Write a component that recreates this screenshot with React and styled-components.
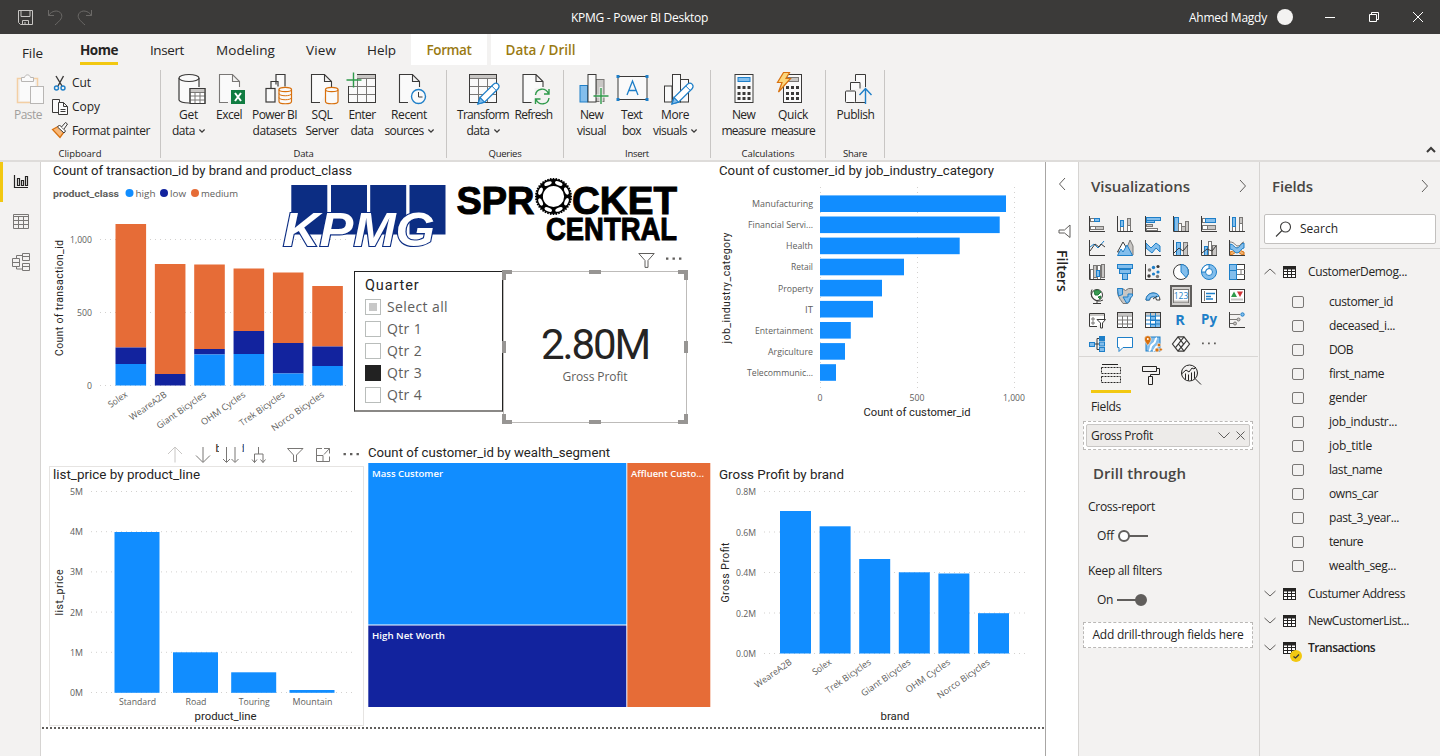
import React, { useLayoutEffect, useRef } from "react";
import styled, { createGlobalStyle, css } from "styled-components";

const UI = `"Open Sans", "Noto Sans", sans-serif`;
const DIN = `Roboto, "Liberation Sans", sans-serif`;
const C = {
  blue: "#118DFF", navy: "#12239E", orange: "#E66C37", ink: "#252423", grey: "#605E5C",
  pane: "#F3F2F1", line: "#D6D4D2", yellow: "#F2C811", ib: "#1E7FC8", ibf: "#83BEEC",
  ig: "#797775", igf: "#C8C6C4", dark: "#3B3A39", or: "#D8700D",
};

const Global = createGlobalStyle`
  * { box-sizing: border-box; }
  body { margin: 0; background: #fff; font-family: ${UI}; color: ${C.ink}; overflow: hidden; }
  svg { display: block; flex: none; overflow: visible; }
`;

/* ---------- text ---------- */
const Label = styled.span`
  display: block;
  flex: none;
  white-space: nowrap;
  font-family: ${(p) => (p.$din ? DIN : UI)};
  font-size: ${(p) => p.$size || 12}px;
  font-weight: ${(p) => p.$weight || 400};
  color: ${(p) => p.$color || C.ink};
  line-height: ${(p) => p.$lh || 16}px;
`;

/* Tracks its text so that it takes the given width. */
function T({ w, children, ...rest }) {
  const ref = useRef(null);
  useLayoutEffect(() => {
    const el = ref.current;
    if (!w || !el) return;
    const range = document.createRange();
    el.style.letterSpacing = "0px";
    range.selectNodeContents(el);
    const natural = range.getBoundingClientRect().width;
    el.style.letterSpacing = `${(w - natural) / String(children).length}px`;
  }, [w, children]);
  return <Label ref={ref} {...rest}>{children}</Label>;
}

function St({ x, y, w, size = 9, anchor = "start", fill = C.grey, din, weight = 400, rot, children }) {
  return (
    <text x={x} y={y} fontSize={size} fontFamily={din ? DIN : UI} fontWeight={weight} fill={fill}
      textAnchor={anchor} textLength={w} lengthAdjust="spacingAndGlyphs"
      transform={rot ? `rotate(${rot} ${x} ${y})` : undefined}>{children}</text>
  );
}

/* ---------- frame ---------- */
const Window = styled.div`
  width: 1440px; height: 756px; display: flex; flex-direction: column; overflow: hidden;
`;
const TitleBar = styled.header`
  height: 34px; background: ${C.dark}; display: flex; align-items: center; padding-left: 17px; flex: none;
`;
const TitleText = styled.div`margin-left: 478px; width: 137px; padding-top: 2px;`;
const UserText = styled.div`margin-left: 481px; width: 78px; padding-top: 2px;`;
const Avatar = styled.div`
  width: 16px; height: 16px; border-radius: 50%; background: ${C.pane}; margin-left: 10px;
`;
const Ribbon = styled.section`
  height: 128px; flex: none; background: ${C.pane}; border-bottom: 2px solid #dedcda; display: flex; flex-direction: column;
`;
const Tabs = styled.nav`display: flex; height: 36px; flex: none;`;
const Tab = styled.div`
  margin-left: ${(p) => p.$gap}px; padding-top: ${(p) => p.$top || 8}px; height: 31px;
  ${(p) => p.$active && css`border-bottom: 3px solid ${C.yellow};`}
  ${(p) => p.$ctx && css`background: #fff; width: ${p.$ctx}px; display: flex; justify-content: center;`}
`;
const Groups = styled.div`display: flex; height: 90px;`;
const Group = styled.div`
  width: ${(p) => p.$w}px; height: 88px; border-right: 1px solid #c8c6c4; display: flex; flex-direction: column;
`;
const GroupBody = styled.div`display: flex; height: 75px; padding-left: ${(p) => p.$pad || 0}px;`;
const GroupName = styled.div`display: flex; justify-content: center; padding-top: 1px; height: 13px;`;
const BigButton = styled.div`
  width: ${(p) => p.$w}px; display: flex; flex-direction: column; align-items: center; flex: none;
  & > svg { margin-bottom: 1px; }
`;
const Line2 = styled.div`display: flex; align-items: center; gap: 4px;`;
const SmallButtons = styled.div`display: flex; flex-direction: column; padding-top: 1px;`;
const SmallButton = styled.div`height: 24px; display: flex; align-items: center; gap: 4px;`;
const Collapse = styled.div`margin-left: auto; align-self: flex-end; padding: 0 4px 7px 0;`;

const Body = styled.div`display: flex; flex: 1; min-height: 0;`;
const Rail = styled.nav`
  width: 41px; background: ${C.pane}; border-right: 1px solid ${C.line}; flex: none; display: flex; flex-direction: column;
`;
const RailItem = styled.div`
  height: 40px; display: flex; align-items: center; padding-left: ${(p) => (p.$on ? 9 : 12)}px;
  ${(p) => p.$on && css`border-left: 3px solid ${C.yellow};`}
`;
const Canvas = styled.main`
  position: relative; width: 1005px; background: #fff; border-right: 1px solid #a8a6a4; flex: none; overflow: hidden;
`;
const Visual = styled.div`
  position: absolute; left: ${(p) => p.$x - 41}px; top: ${(p) => p.$y - 162}px;
  width: ${(p) => p.$w}px; height: ${(p) => p.$h}px; ${(p) => p.$bg && `background: ${p.$bg};`}
`;
const PageEdge = styled.div`
  position: absolute; left: 1px; right: 0; top: 565px; height: 2px;
  background: repeating-linear-gradient(90deg, ${C.grey} 0 2px, #fff 2px 4px);
`;

/* ---------- slicer and card ---------- */
const Slicer = styled(Visual)`
  border: 1px solid #222; border-bottom: 2px solid #8a8886; padding: 6px 0 0 10px; display: flex; flex-direction: column;
`;
const SlicerRows = styled.div`padding-top: 2px;`;
const SlicerRow = styled.div`display: flex; align-items: center; height: 22px; gap: 6px;`;
const SlicerBox = styled.div`
  width: 16px; height: 16px; border: 1px solid #b9bdbb; background: ${(p) => (p.$state === "on" ? "#222" : "#fff")};
  display: flex; align-items: center; justify-content: center;
  ${(p) => p.$state === "on" && "border-color: #222;"}
  &::after { content: ""; width: 8px; height: 8px; background: ${(p) => (p.$state === "part" ? "#c8c8c8" : "transparent")}; }
`;
const Card = styled(Visual)`
  display: flex; flex-direction: column; align-items: center; padding-top: 49px; border: 1px solid #bdbbb9;
`;
const Handle = styled.i`
  position: absolute; background: #979593;
  left: ${(p) => p.$l}px; top: ${(p) => p.$t}px; width: ${(p) => p.$w}px; height: ${(p) => p.$h}px;
`;

/* ---------- side panes ---------- */
const Filters = styled.aside`
  width: 33px; background: #fff; border-right: 1px solid ${C.line}; flex: none;
  display: flex; flex-direction: column; align-items: center; padding-top: 15px;
`;
const FilterMark = styled.div`margin-top: 33px; padding-left: 4px;`;
const VerticalLabel = styled.div`
  writing-mode: vertical-rl; margin-top: 12px; font: 600 14px/18px ${UI}; color: ${C.ink}; letter-spacing: 0; height: 48px;
`;
const Pane = styled.aside`
  width: 181px; background: ${C.pane}; flex: none; display: flex; flex-direction: column;
  ${(p) => p.$edge && `border-right: 1px solid ${C.line};`}
`;
const PaneHead = styled.div`
  height: 50px; display: flex; align-items: center; justify-content: space-between; padding: 0 12px 2px;
`;
const VizGrid = styled.div`
  display: grid; grid-template-columns: repeat(6, 28px); grid-auto-rows: 24px; padding-left: 4px; height: 144px;
`;
const VizCell = styled.div`
  display: flex; align-items: center; justify-content: center;
`;
const VizPicked = styled.div`
  width: 22px; height: 22px; border: 2px solid #605e5c; background: #d2d0ce; display: flex; align-items: center; justify-content: center;
`;
const PaneTabs = styled.div`display: flex; border-top: 1px solid #d8d6d4; height: 36px; padding-left: 12px; margin-right: 1px;`;
const PaneTab = styled.div`
  width: 40px; height: 36px; display: flex; align-items: center; justify-content: center;
  ${(p) => p.$on && `border-bottom: 3px solid ${C.yellow};`}
`;
const FieldsLabel = styled.div`padding: 7px 0 0 12px; height: 29px;`;
const Well = styled.div`
  margin: ${(p) => p.$gap || 0}px 6px 0 4px; height: ${(p) => p.$h}px; border: 1px dashed #bab8b6; background: #fff; padding: 2px;
  display: flex; align-items: center; justify-content: center;
`;
const Pill = styled.div`
  height: 23px; flex: 1; background: #edebe9; border: 1px solid #c8c6c4; border-radius: 2px; display: flex; align-items: center; padding: 0 4px; gap: 6px;
`;
const Grow = styled.div`flex: 1;`;
const DrillHead = styled.div`padding: 15px 0 0 14px; height: 41px;`;
const Setting = styled.div`padding: 8px 0 0 9px; height: 32px;`;
const ToggleRow = styled.div`height: 32px; padding: 0 0 6px 18px; display: flex; align-items: center; gap: 4px;`;

const Search = styled.div`
  margin: 2px 3px 4px 4px; width: 172px; height: 30px; border: 1px solid #c2c0be; border-radius: 2px; background: #fff; display: flex; align-items: center; padding-left: 10px; gap: 8px;
`;
const Tree = styled.div`border-top: 1px solid ${C.line}; padding-top: 9px;`;
const TableRow = styled.div`
  height: 27px; display: flex; align-items: center; padding-left: 4px; gap: 7px; position: relative;
`;
const TableName = styled.div`margin-left: 5px;`;
const FieldList = styled.div`padding: 5px 0 2px;`;
const FieldRow = styled.div`height: 24px; display: flex; align-items: center; padding-left: 32px; gap: 25px;`;
const CheckBox = styled.div`width: 12px; height: 12px; border: 1px solid #797775; border-radius: 2px; margin-top: -1px;`;
const TickBadge = styled.div`position: absolute; left: 30px; top: 16px;`;

/* ---------- small icons ---------- */
const Svg = ({ w, h, box, children, sw = 1, stroke = C.dark, fill = "none" }) => (
  <svg width={w} height={h} viewBox={box || `0 0 ${w} ${h}`} fill={fill} stroke={stroke} strokeWidth={sw}>{children}</svg>
);
const Chevron = ({ d, w = 12, h = 7, color = C.grey, sw = 1 }) => <Svg w={w} h={h} stroke={color} sw={sw}><path d={d} /></Svg>;
const DownSmall = () => <Svg w={6} h={4} sw={1.3}><path d="M.4.5 3 3.100 5.600.5" /></Svg>;
const Funnel = ({ color = C.grey }) => <Svg w={17} h={15} stroke={color}><path d="M.8.5h15.4L10 7.5v6.9H7V7.5z" /></Svg>;
const Dots = () => <Svg w={16} h={3} stroke="none" fill={C.grey}><path d="M0 .5h2.4v2.2H0zM6.5.5h2.4v2.2H6.5zM13 .5h2.4v2.2H13z" /></Svg>;

const Pencil = ({ x, y }) => (
  <g transform={`translate(${x} ${y})`}>
    <path d="M0 21 2 14.5 15.5 1.2q2.6-2 4.6 0t0 4.6L6.5 19.2z" fill="#fff" stroke={C.ib} strokeWidth="1.2" />
    <path d="M0 21 2 14.5 6.5 19.2z" fill={C.ibf} stroke={C.ib} strokeWidth="1.2" />
    <path d="M13.8 3 18.3 7.5" stroke={C.ib} />
  </g>
);
const Page = ({ x, c = C.dark }) => <path d={`M${x + 9} 102.5H${x}.5V74.5H${x + 13}.5L${x + 20}.5 81.5V87M${x + 13}.5 74.5V81.5H${x + 20}.5`} stroke={c} fill="#fafafa" strokeWidth="1.1" />;
const Drum = ({ x }) => (
  <g stroke={C.or} fill="#fafafa" strokeWidth="1.2">
    <path d={`M${x} 89.5V101.5c0 3 12.5 3 12.5 0V89.5`} />
    <ellipse cx={x + 6.25} cy="89.5" rx="6.25" ry="2.2" />
  </g>
);
const Grid9 = ({ x }) => (
  <g><rect x={x} y="74.5" width="27" height="28" fill="#fafafa" /><path d={`M${x} 76.5h27`} stroke={C.igf} strokeWidth="3" />
    <path d={`M${x} 78.5h27M${x} 86.5h27M${x} 94.5h27M${x + 9} 78.5v24M${x + 18} 78.5v24`} stroke={C.ig} /><rect x={x} y="74.5" width="27" height="28" /></g>
);
const Calc = ({ x, f }) => (
  <g><rect x={x + 0.5} y="74.5" width="18" height="28" fill="#fafafa" /><rect x={x + 3.5} y="77.5" width="12" height="4" fill={f} stroke={f === C.ibf ? C.ib : C.ig} />
    {[86, 92, 97].map((y) => [3, 8, 13].map((d) => <rect key={y + "-" + d} x={x + d} y={y} width="3" height="3" fill={C.dark} stroke="none" />))}</g>
);

const BIG = {
  paste: <g><rect x="17.5" y="78.5" width="20" height="24" stroke="#f3cfa4" strokeWidth="1.5" /><rect x="20" y="81" width="15" height="20" fill="#fafafa" stroke="none" /><path d="M21.5 81.5v-4h3c1-3.500 5-3.500 6 0h3v4z" fill="#fafafa" stroke="#b8b6b4" /><rect x="30.500" y="86.500" width="13" height="17" fill="#fafafa" stroke="#b8b6b4" /></g>,
  get: <g><path d="M179 78h19.500v10h-9v15q-9 0-10.500-3z" fill="#fafafa" stroke="none" /><path d="M178.500 78v22c1 2 4 3 10 3M198.500 78v9" strokeWidth="1.2" /><ellipse cx="188.500" cy="78" rx="10" ry="3.500" fill="#fafafa" strokeWidth="1.200" /><rect x="189.500" y="88.500" width="15" height="15" fill="#fff" /><path d="M190 90.500h14" stroke={C.igf} strokeWidth="3" /><path d="M189.500 92.500h15M189.500 96h15M189.500 100h15M194.500 92.500v11M199.500 92.500v11" stroke={C.ig} /><rect x="189.500" y="88.500" width="15" height="15" /></g>,
  excel: <g><Page x={219} c={C.ig} /><rect x="231" y="90" width="14" height="14" fill="#107C41" stroke="none" /><path d="M235 93l6 8M241 93l-6 8" stroke="#fff" strokeWidth="2" /></g>,
  pbi: <g><path d="M275.500 84.500v-10h9v12M270.500 88v-6.500h7v5" fill="#fafafa" strokeWidth="1.200" /><rect x="265.500" y="88.500" width="9" height="13.500" fill="#fafafa" strokeWidth="1.200" /><Drum x={278.500} /><path d="M278.500 93.500c0 3 12.500 3 12.500 0M278.500 97.500c0 3 12.500 3 12.500 0" stroke={C.or} /></g>,
  sql: <g><Page x={311} /><Drum x={325.500} /></g>,
  enter: <g><Grid9 x={348.500} /><rect x="346" y="73" width="11" height="13" fill={C.pane} stroke="none" /><path d="M353.500 72.500v15M346.500 80h15" stroke="#2F9A4B" strokeWidth="1.400" /></g>,
  recent: <g><Page x={399} /><circle cx="418.500" cy="96.500" r="7" fill="#fafafa" stroke={C.ib} strokeWidth="1.400" /><path d="M418.500 92v5h4" stroke={C.dark} /></g>,
  transform: <g><Grid9 x={469.500} /><Pencil x={478} y={83} /></g>,
  refresh: <g><Page x={522} /><rect x="534" y="88" width="16" height="16" fill={C.pane} stroke="none" /><path d="M535 95c1-7 10-8 13-1.500M548.500 89v5h-5M548.500 98c-1 7-10 8-13 1.500M535 104v-5h5" stroke="#2F9A4B" strokeWidth="1.400" /></g>,
  visual: <g><rect x="579.500" y="85.500" width="7.500" height="16.500" fill={C.ibf} stroke={C.ib} /><rect x="595.500" y="79.500" width="8" height="22" fill={C.igf} stroke={C.ig} /><rect x="587.500" y="74.500" width="8" height="27.500" fill="#fafafa" /><path d="M600.500 87v17M596 96h12" stroke={C.pane} strokeWidth="3" /><path d="M600.500 88v16M593 96h15" stroke="#2F9A4B" strokeWidth="1.400" /></g>,
  text: <g><rect x="617.500" y="76.500" width="29" height="23" fill="#fafafa" /><path d="M616 75h3v3h-3zM645 75h3v3h-3zM616 98h3v3h-3zM645 98h3v3h-3z" fill={C.ib} stroke="none" /><path d="M626.500 95 632 81 637.500 95M628.500 90.500h7" stroke={C.ib} strokeWidth="1.300" /></g>,
  more: <g fill="#fafafa"><rect x="664.500" y="86" width="7.500" height="16" /><rect x="680.500" y="79.500" width="8" height="22.500" /><rect x="672.500" y="74.500" width="8" height="27.500" /><Pencil x={672} y={83} /></g>,
  measure: <Calc x={734} f={C.ibf} />,
  quick: <g><Calc x={783} f={C.igf} /><path d="M783.500 72.500h6l-3.500 6h4.500L778.500 92l3.500-9.500h-4.500z" fill="#FBD67B" stroke={C.or} strokeWidth="1.200" /></g>,
  publish: <g><path d="M854.500 81v-6.500h10V87M849.500 90v-7.500h9.500v6M864 102.500h-10" fill="#fafafa" /><rect x="844.500" y="91" width="10" height="11.500" rx="1" fill="#fafafa" /><path d="M864.500 104V89M858.500 95l6-6.500 6 6.500" stroke={C.ib} strokeWidth="1.400" /></g>,
};

const GROUPS = [
  { name: "Data", nw: 20, w: 286, pad: 7, items: [
    ["get", 41, 188.5, "Get", 19, "data", 23, 1], ["excel", 40, 229, "Excel", 26], ["pbi", 51, 274.5, "Power BI", 45, "datasets", 44],
    ["sql", 44, 322, "SQL", 21, "Server", 33], ["enter", 36, 362, "Enter", 27, "data", 23], ["recent", 58, 409, "Recent", 36, "sources", 39, 1]] },
  { name: "Queries", nw: 33, w: 117, pad: 9, items: [["transform", 54, 483, "Transform", 52, "data", 23, 1], ["refresh", 47, 533.5, "Refresh", 38]] },
  { name: "Insert", nw: 24, w: 147, pad: 9, items: [["visual", 37, 591.5, "New", 23, "visual", 29], ["text", 43, 631.5, "Text", 21, "box", 19], ["more", 44, 675, "More", 28, "visuals", 34, 1]] },
  { name: "Calculations", nw: 53, w: 115, pad: 8, items: [["measure", 49, 743.5, "New", 23, "measure", 44], ["quick", 50, 793, "Quick", 30, "measure", 44]] },
  { name: "Share", nw: 24, w: 59, pad: 5, items: [["publish", 49, 855, "Publish", 38]] },
];

/* ---------- visualization gallery ---------- */
const b = (x, y, w, h) => <rect x={x + 0.5} y={y + 0.5} width={w} height={h} fill={C.ibf} stroke={C.ib} />;
const g = (x, y, w, h) => <rect x={x + 0.5} y={y + 0.5} width={w} height={h} fill={C.igf} stroke={C.ig} />;
const k = (x, y, w, h) => <rect x={x + 0.5} y={y + 0.5} width={w} height={h} fill="#fff" stroke={C.ig} />;
const ax = <path d="M.5 0V15.500H16" stroke={C.dark} />;
const VIZ = [
  <>{k(1, 2, 4, 3)}{b(5, 2, 5, 3)}{k(1, 10, 5, 3)}{g(6, 10, 8, 3)}{ax}</>,
  <>{k(3, 10, 3, 5)}{b(3, 4, 3, 6)}{k(10, 9, 3, 6)}{g(10, 2, 3, 7)}{ax}</>,
  <>{b(1, 1, 14, 3)}{b(1, 4, 8, 2)}{g(1, 8, 6, 2)}{k(1, 12, 11, 2)}{ax}</>,
  <>{b(1, 1, 4, 14)}{k(5, 7, 3, 8)}{g(8, 10, 4, 5)}{g(12, 5, 3, 10)}{ax}</>,
  <>{k(1, 2, 3, 4)}{b(4, 2, 10, 4)}{k(1, 9, 5, 4)}{g(6, 9, 8, 4)}{ax}</>,
  <>{k(3, 10, 3, 5)}{b(3, 1, 3, 9)}{k(10, 7, 3, 8)}{g(10, 1, 3, 6)}{ax}</>,
  <><path d="M1 7 5 4l4 4 6-7" stroke={C.ib} /><path d="M1 11 6 4l4 3 2-3 4 3" stroke={C.dark} />{ax}</>,
  <><path d="M7 15 13 0l3 6v9z" fill={C.igf} stroke={C.ig} /><path d="M.5 12 6 2l6 10z" fill="#fff" stroke={C.dark} /><path d="M.5 15.500 4 9l2 3 4-7 5.500 10.500z" fill={C.ibf} stroke={C.ib} /></>,
  <><path d="M1 3l5 5 5-5 4 3v6l-4-4-4 5-6-5z" fill={C.ibf} stroke={C.ib} />{ax}</>,
  <>{b(3, 2, 4, 13)}{g(10, 2, 4, 13)}<path d="M1 13 6 8l4 3 5-6" stroke={C.dark} />{ax}</>,
  <>{b(3, 6, 3, 9)}{k(7, 1, 3, 14)}{g(11, 5, 4, 10)}<path d="M1 13 6 9l5 2 4-5" stroke={C.dark} />{ax}</>,
  <><path d="M1 12c4 0 4-4 7-4s4 4 7 4v3c-4 0-4-3-7-3s-3 3-7 3z" fill="#F1B16F" stroke={C.or} /><path d="M1 4c4 0 4 4 7 4s3-5 7-5v5c-3 0-4 5-7 5S5 9 1 9z" fill={C.ibf} stroke={C.ib} /><path d="M1 2c5 0 5 4 8 4s3-4 6-4" stroke={C.ig} />{ax}</>,
  <>{k(1, 5, 3, 10)}{g(4, 1, 3, 12)}{k(8, 1, 3, 14)}{b(7, 6, 3, 6)}{g(12, 0, 3, 13)}{ax}</>,
  <>{b(0, 0, 15, 4)}{b(2, 5, 11, 4)}{b(5, 9, 5, 6)}</>,
  <><g stroke="none"><circle cx="4.500" cy="6" r="1.800" fill={C.ig} /><circle cx="13" cy="2.500" r="1.600" fill={C.dark} /><circle cx="8.500" cy="3.500" r="1.700" fill={C.ib} /><circle cx="8.500" cy="10" r="1.600" fill={C.ib} /><circle cx="13" cy="8" r="1.600" fill={C.ib} /><circle cx="4" cy="12" r="1.700" fill={C.dark} /><circle cx="12.500" cy="12.500" r="1.700" fill={C.ig} /></g>{ax}</>,
  <><circle cx="8" cy="8" r="7.500" fill="#fff" /><path d="M8 .500a7.500 7.500 0 0 1 5 13L8 8z" fill={C.ibf} stroke={C.ib} /></>,
  <><circle cx="8" cy="8" r="5.500" stroke={C.ibf} strokeWidth="4" /><circle cx="8" cy="8" r="7.500" stroke={C.ib} /><circle cx="8" cy="8" r="3.500" stroke={C.ib} fill="#fff" /><path d="M4.500 8H.500A7.500 7.500 0 0 1 8 .500v4A3.500 3.500 0 0 0 4.500 8" fill="#fff" stroke={C.ib} /></>,
  <><rect x=".5" y=".5" width="15" height="15" fill="#fff" />{b(0, 0, 7, 6)}{b(0, 6, 7, 9)}<path d="M8 5.500h8M12 5.500v5M8 10.500h8" stroke={C.ig} /></>,
  <><circle cx="8" cy="7" r="5.500" fill="#fff" /><path d="M5 3l4-1 3 2-3 3-3 0zM9 9l3-1-1 3z" fill="#3A9B53" stroke="#237B3C" /><path d="M3 1.500A8 8 0 0 0 14 12M8 13v2.500M4 15.500h8" /></>,
  <><path d="M.500.500h5l3 2 3-2h4v7c-3 2-2 7-5 8H6C4 12 0 9 .500.500" fill={C.igf} stroke={C.ig} /><path d="M.500.500h5v6L1.500 8zM6 9h5v-3h4.500v2c-4 2-2 7-6 7z" fill={C.ibf} stroke={C.ib} /></>,
  <><path d="M1 12a7 7 0 0 1 14 0h-3.500a3.500 3.500 0 0 0-7 0z" fill="#fff" stroke={C.dark} /><path d="M1 12C1 4 12 3 14 8l-3.500 1.500C8 8 4.500 9 4.500 12z" fill={C.ibf} stroke={C.ib} /><path d="M8 11l4-3" /></>,
  <><rect x=".5" y="1.500" width="15" height="13" fill="#fff" stroke={C.ig} /><path d="M1 13.500h14" stroke={C.igf} strokeWidth="2" /><text x="8" y="10.500" fontSize="8.500" textAnchor="middle" fontFamily={UI} stroke="none" fill={C.ib}>123</text></>,
  <><rect x=".5" y="1.500" width="15" height="13" fill="#fff" /><path d="M3.500 3v10" stroke={C.ig} /><path d="M5 5.500h9M5 8.500h5M5 11h7" stroke={C.ib} strokeWidth="1.500" /></>,
  <><rect x=".5" y="1.500" width="15" height="13" fill="#fff" /><path d="M2 9 5 3.500 8 9z" fill="#2F9A4B" stroke="none" /><path d="M8 3.500h6L11 9z" fill="#D13438" stroke="none" /><path d="M2 11.500h12" stroke={C.igf} strokeWidth="2" /></>,
  <><path d="M8 14.500H.500v-13h15V7" fill="#fff" /><path d="M1 3h14" stroke={C.igf} strokeWidth="2" /><path d="M3 6h2v2H3zM3 10h2v2H3z" stroke={C.ig} /><path d="M8 7.500h8.500L13.500 11v5h-2v-5z" fill="#fff" /></>,
  <><rect x=".5" y=".5" width="15" height="15" fill="#fff" /><path d="M1 2h14" stroke={C.igf} strokeWidth="2" /><path d="M.5 4h15M.5 8h15M.5 12h15M5.500 4v12M10.500 4v12" stroke={C.ig} /></>,
  <><rect x=".5" y=".5" width="15" height="15" fill="#fff" /><path d="M1 2h14" stroke={C.igf} strokeWidth="3" />{b(5, 4, 5, 4)}{b(10, 8, 5, 7)}{b(5, 12, 5, 3)}<path d="M.5 4h15M.5 8h15M.5 12h15M5.500 0v16M10.500 0v16" stroke={C.ib} /><rect x=".5" y=".5" width="15" height="15" /></>,
  <text x="7" y="13" fontSize="14.500" textAnchor="middle" fontWeight="700" fontFamily={UI} stroke="none" fill={C.ib}>R</text>,
  <text x="8" y="12" fontSize="14" textAnchor="middle" textLength="16" lengthAdjust="spacingAndGlyphs" fontWeight="700" fontFamily={UI} stroke="none" fill={C.ib}>Py</text>,
  <><path d="M1 2.500h10M1 7.500h8M1 11.500h4" stroke={C.ig} /><circle cx="13.500" cy="2.500" r="1.700" fill={C.ibf} stroke={C.ib} /><circle cx="9.500" cy="7.500" r="1.500" stroke={C.ig} fill={C.igf} /><circle cx="6" cy="11.500" r="1.500" stroke={C.ig} fill={C.igf} />{ax}</>,
  <><path d="M6 8h4M8 2.500v11M8 2.500h3M8 13.500h3" />{b(0, 6, 5, 4)}<rect x="10.500" y=".5" width="5" height="4" fill={C.ib} stroke={C.ib} /><rect x="10.500" y="6" width="5" height="4" fill={C.ibf} stroke={C.ib} /><rect x="10.500" y="11.500" width="5" height="4" fill={C.ibf} stroke={C.ib} /></>,
  <path d="M.5 1.500h15v10H6l-4 4v-4H.500z" fill="#fff" stroke={C.ib} />,
  <><rect x="1" y="1" width="14" height="14" fill={C.ibf} stroke={C.ib} /><path d="M4 15c3-2 0-5 4-7s1-5 4-6M8 15c3-1 1-4 5-5" stroke="#fff" strokeWidth="2" /><g fill={C.or} stroke={C.pane} strokeWidth=".6"><path d="M2.800 9.500C0 6-.500 4.500-.500 3a3.300 3.300 0 0 1 6.600 0c0 1.500-.500 3-3.300 6.500z" /><circle cx="14" cy="9" r="1.800" /><circle cx="12" cy="14" r="2" /><circle cx="15.800" cy="13.500" r="1.500" /></g><circle cx="2.800" cy="3" r="1" fill="#fff" stroke="none" /></>,
  <g strokeWidth="1.200"><path d="M5 .8-.5 8 5 15.200h6L16.500 8 11 .8z" fill="#fafafa" /><path d="M5 .8 10.500 8 5 15.200M11 .8 2.500 11.700M11 15.200 5.500 8M13.700 4.500 8 11.700" /></g>,
  <path d="M1 6.500h1.800v1.800H1zM7 6.500h1.800v1.800H7zM13 6.500h1.800v1.800H13z" fill={C.grey} stroke="none" />,
];

/* ---------- charts ---------- */
const grid = { stroke: "#d3d1cf", strokeWidth: 1, strokeDasharray: "1 4" };

function StackedChart() {
  const tops = [[224, 347.5, 364], [264, 374, 385.5], [264.5, 349, 354.5], [268.5, 331, 354], [272.5, 343, 373.5], [286, 346.5, 366]];
  const names = [["Solex", 21], ["WeareA2B", 43], ["Giant Bicycles", 58], ["OHM Cycles", 52], ["Trek Bicycles", 53], ["Norco Bicycles", 62]];
  return (
    <Visual $x={45} $y={162} $w={312} $h={280}>
      <svg width="312" height="280" viewBox="45 162 312 280">
        <St x={53} y={175} w={299} size={12} fill={C.ink} din>Count of transaction_id by brand and product_class</St>
        <St x={53} y={197} w={66} size={9.5} din weight={700}>product_class</St>
        {[["high", C.blue, 129.5, 20], ["low", C.navy, 164, 16], ["medium", C.orange, 195, 37]].map(([n, c, x, w]) => (
          <g key={n}><circle cx={x} cy="193" r="4" fill={c} /><St x={x + 6} y={197} w={w} size={9.5}>{n}</St></g>
        ))}
        {[239.5, 312.5, 385.5].map((y) => <path key={y} d={`M100 ${y}H350`} {...grid} />)}
        <St x={92} y={243} w={22} anchor="end">1,000</St>
        <St x={92} y={316} w={15} anchor="end">500</St>
        <St x={92} y={389} w={5} anchor="end">0</St>
        <text transform="translate(63 298) rotate(-90)" textAnchor="middle" textLength="116" fontFamily={DIN} fontSize="10.500" fill={C.ink}>Count of transaction_id</text>
        {tops.map(([m, l, h], i) => {
          const x = 115.500 + i * 39.350;
          return (
            <g key={i}>
              <rect x={x} y={m} width="30.600" height={l - m} fill={C.orange} />
              <rect x={x} y={l} width="30.600" height={h - l} fill={C.navy} />
              <rect x={x} y={h} width="30.600" height={385.5 - h} fill={C.blue} />
              <St x={128 + i * 39.350} y={396} w={names[i][1]} anchor="end" rot={-35}>{names[i][0]}</St>
            </g>
          );
        })}
      </svg>
    </Visual>
  );
}

function Logos() {
  const teeth = Array.from({ length: 40 }, (_, i) => i * 9);
  return (
    <Visual $x={276} $y={176} $w={410} $h={90}>
      <svg width="410" height="90" viewBox="276 176 410 90">
        {[291.3, 331, 370.2, 409.5].map((x) => <rect key={x} x={x} y="185" width="36" height="49.500" fill="#0C2D83" />)}
        <text x="283" y="246" fontFamily="Liberation Sans" fontWeight="700" fontStyle="italic" fontSize="48" textLength="152" lengthAdjust="spacingAndGlyphs" fill="#fff" stroke="#0C2D83" strokeWidth="2.200" paintOrder="stroke">KPMG</text>
        <g fontFamily="Liberation Sans" fontWeight="700" fill="#000" stroke="#000" strokeWidth="1">
          <text x="456.500" y="213.500" fontSize="39" textLength="78" lengthAdjust="spacingAndGlyphs">SPR</text>
          <text x="572" y="213.500" fontSize="39" textLength="105" lengthAdjust="spacingAndGlyphs">CKET</text>
          <text x="546" y="239.500" fontSize="32" textLength="131" lengthAdjust="spacingAndGlyphs">CENTRAL</text>
        </g>
        <g transform="translate(553.500 196.500)">
          {teeth.map((a) => <rect key={a} x="-.8" y="-18.500" width="1.600" height="3" transform={`rotate(${a})`} />)}
          <circle r="14" fill="none" stroke="#000" strokeWidth="6.800" />
          {Array.from({ length: 8 }, (_, i) => <ellipse key={i} cx="0" cy="-14" rx="3.900" ry="1.900" fill="#fff" transform={`rotate(${i * 45 + 22})`} />)}
        </g>
      </svg>
    </Visual>
  );
}

function IndustryChart() {
  const rows = [["Manufacturing", 1006, 61], ["Financial Servi...", 999.7, 65], ["Health", 959.7, 27], ["Retail", 904, 22], ["Property", 882, 35], ["IT", 873, 8], ["Entertainment", 850.8, 58], ["Argiculture", 845, 45], ["Telecommunic...", 836, 66]];
  return (
    <Visual $x={714} $y={162} $w={326} $h={262}>
      <svg width="326" height="262" viewBox="714 162 326 262">
        <St x={719} y={175} w={275} size={12} fill={C.ink} din>Count of customer_id by job_industry_category</St>
        {[820, 917, 1014].map((x) => <path key={x} d={`M${x}.5 187V388`} {...grid} />)}
        {rows.map(([n, end, w], i) => (
          <g key={n}>
            <rect x="820" y={195.400 + i * 21.100} width={end - 820} height="16.600" fill={C.blue} />
            <St x={813} y={207.100 + i * 21.100} w={w} anchor="end">{n}</St>
          </g>
        ))}
        <St x={820} y={401} w={5} anchor="middle">0</St>
        <St x={917} y={401} w={15} anchor="middle">500</St>
        <St x={1014} y={401} w={22} anchor="middle">1,000</St>
        <St x={917} y={416} w={107} size={10.5} anchor="middle" fill={C.ink} din>Count of customer_id</St>
        <text transform="translate(730 288) rotate(-90)" textAnchor="middle" textLength="111" fontFamily={DIN} fontSize="10.500" fill={C.ink}>job_industry_category</text>
      </svg>
    </Visual>
  );
}

function PriceChart() {
  const bars = [["Standard", 114.500, 532, 37], ["Road", 173, 652.3, 21], ["Touring", 231.200, 672.3, 31], ["Mountain", 289.500, 690, 40]];
  return (
    <Visual $x={45} $y={440} $w={322} $h={288}>
      <svg width="322" height="288" viewBox="45 440 322 288">
        <St x={215.500} y={452} w={29} size={11} fill={C.ink} din>brand</St>
        <path d="M219 442h23.500v14h-23.500zM244.500 442h4v14h-4z" fill="#fff" />
        <g fill="none" stroke={C.ig}>
          <path d="M175 462.500v-15M168 454l7-7 7 7" stroke="#c8c6c4" />
          <path d="M203 447v15M196 455.500l7 7 7-7" />
          <path d="M226.500 447v15M223 459l3.500 3.500 3.500-3.500M235 447v15M231.500 459l3.500 3.500 3.500-3.500" />
          <path d="M258.500 447v7M254.500 462.500v-8.500h8.500v8.500M252 459.500l2.500 3 2.500-3M260.500 459.500l2.500 3 2.500-3" />
          <path d="M287.500 448.500h15.500l-6.500 6.500v6.500h-3V455z" />
          <path d="M322 448.500h-5.500v13h13v-5M316.500 455.500h6.500v6M324 448.500h5.500v5M329.500 448.500l-5.500 6" />
        </g>
        <path d="M343.500 453h2.400v2.200h-2.400zM350 453h2.400v2.200h-2.400zM356.500 453h2.400v2.200h-2.400z" fill={C.grey} />
        <rect x="49.500" y="466.500" width="314" height="259" fill="#fff" stroke="#e6e4e2" />
        <St x={53} y={479} w={147} size={12} fill={C.ink} din>list_price by product_line</St>
        {["5M", "4M", "3M", "2M", "1M", "0M"].map((n, i) => (
          <g key={n}><path d={`M91 ${491.500 + i * 40.200}H356`} {...grid} /><St x={83} y={495 + i * 40.200} w={13} anchor="end">{n}</St></g>
        ))}
        {bars.map(([n, x, y, w]) => (
          <g key={n}><rect x={x} y={y} width="45" height={692.800 - y} fill={C.blue} /><St x={x + 23} y={705} w={w} anchor="middle">{n}</St></g>
        ))}
        <St x={225.500} y={720} w={62} size={10.500} anchor="middle" fill={C.ink} din>product_line</St>
        <text transform="translate(63 592.500) rotate(-90)" textAnchor="middle" textLength="46" fontFamily={DIN} fontSize="10.500" fill={C.ink}>list_price</text>
      </svg>
    </Visual>
  );
}

function TreeMap() {
  return (
    <Visual $x={366} $y={442} $w={348} $h={270}>
      <svg width="348" height="270" viewBox="366 442 348 270">
        <St x={368} y={457} w={242} size={12} fill={C.ink} din>Count of customer_id by wealth_segment</St>
        <rect x="368.300" y="463" width="258" height="161.500" fill={C.blue} />
        <rect x="368.300" y="625.500" width="258" height="81.500" fill={C.navy} />
        <rect x="627.300" y="463" width="83" height="244" fill={C.orange} />
        <St x={372} y={477} w={71} size={9} fill="#fff" weight={600}>Mass Customer</St>
        <St x={372} y={639} w={73} size={9} fill="#fff" weight={600}>High Net Worth</St>
        <St x={631} y={477} w={73} size={9} fill="#fff" weight={600}>Affluent Custo...</St>
      </svg>
    </Visual>
  );
}

function ProfitChart() {
  const bars = [["WeareA2B", 511, 43], ["Solex", 526.300, 21], ["Trek Bicycles", 559, 53], ["Giant Bicycles", 572.300, 58], ["OHM Cycles", 573.500, 52], ["Norco Bicycles", 613.200, 62]];
  return (
    <Visual $x={714} $y={464} $w={326} $h={262}>
      <svg width="326" height="262" viewBox="714 464 326 262">
        <St x={719} y={479} w={125} size={12} fill={C.ink} din>Gross Profit by brand</St>
        {["0.8M", "0.6M", "0.4M", "0.2M", "0.0M"].map((n, i) => (
          <g key={n}><path d={`M764 ${491.500 + i * 40.500}H1025`} {...grid} /><St x={756} y={495 + i * 40.500} w={20} anchor="end">{n}</St></g>
        ))}
        {bars.map(([n, y, w], i) => (
          <g key={n}><rect x={780 + i * 39.600} y={y} width="31" height={653.500 - y} fill={C.blue} /><St x={792.500 + i * 39.600} y={663.500} w={w} anchor="end" rot={-35}>{n}</St></g>
        ))}
        <St x={895} y={720} w={29} size={10.500} anchor="middle" fill={C.ink} din>brand</St>
        <text transform="translate(729 572.500) rotate(-90)" textAnchor="middle" textLength="60" fontFamily={DIN} fontSize="10.500" fill={C.ink}>Gross Profit</text>
      </svg>
    </Visual>
  );
}

const TableIcon = () => <Svg w={13} h={12} stroke={C.ink}><rect x=".5" y=".5" width="12" height="11" fill="#fff" /><path d="M0 2h13" strokeWidth="3" /><path d="M0 5.500h13M0 8.500h13M4.500 2v10M8.500 2v10" /></Svg>;
const FIELDS = [["customer_id", 64], ["deceased_i...", 66], ["DOB", 24], ["first_name", 55], ["gender", 38], ["job_industr...", 68], ["job_title", 43], ["last_name", 53], ["owns_car", 49], ["past_3_year...", 70], ["tenure", 34], ["wealth_seg...", 67]];
const HANDLES = [
  [-2, -2, 10, 4], [-2, -2, 4, 10], [85, -2, 12, 4], [174, -2, 10, 4], [180, -2, 4, 10], [-2, 69, 4, 12],
  [180, 69, 4, 12], [-2, 148, 10, 4], [-2, 142, 4, 10], [85, 148, 12, 4], [174, 148, 10, 4], [180, 142, 4, 10],
];

export default function App() {
  return (
    <Window>
      <Global />
      <TitleBar>
        <Svg w={76} h={18} stroke="#6b6967">
          <path d="M1.500 2.500h14v14h-12l-2-2zM4 2.500v6h9v-6M5.500 16.500v-4h6v4M8 14v2" stroke="#c8c6c4" />
          <path d="M31.500 2v5.500H37M31.500 7.500c3-5 10-6 12.500-2s-1 7-6 11.500" />
          <path d="M74.500 2v5.500H69M74.500 7.500c-3-5-10-6-12.500-2s1 7 6 11.500" />
        </Svg>
        <TitleText><T w={137} $color="#fff">KPMG - Power BI Desktop</T></TitleText>
        <UserText><T w={78} $color="#fff">Ahmed Magdy</T></UserText>
        <Avatar />
        <Svg w={105} h={14} stroke="#fff" box="-1 0 105 14"><path d="M31 7.500h10M75.500 4.500h7v7h-7zM77.500 4.500v-2h7v7h-2" /></Svg>
        <Svg w={40} h={14} stroke="#fff"><path d="M15 2l10 10M25 2l-10 10" /></Svg>
      </TitleBar>

      <Ribbon>
        <Tabs>
          <Tab $gap={22} $top={11}><T w={21} $size={13.500}>File</T></Tab>
          <Tab $gap={37} $active><T w={38} $size={13.500} $weight={700}>Home</T></Tab>
          <Tab $gap={32}><T w={34} $size={13.500}>Insert</T></Tab>
          <Tab $gap={32}><T w={59} $size={13.500}>Modeling</T></Tab>
          <Tab $gap={31}><T w={30} $size={13.500}>View</T></Tab>
          <Tab $gap={31}><T w={29} $size={13.500}>Help</T></Tab>
          <Tab $gap={15} $ctx={76}><T w={45} $size={13.500} $weight={600} $color="#9A7A12">Format</T></Tab>
          <Tab $gap={4} $ctx={99}><T w={70} $size={13.500} $weight={600} $color="#9A7A12">Data / Drill</T></Tab>
        </Tabs>
        <Groups>
          <Group $w={161}>
            <GroupBody $pad={5}>
              <BigButton $w={46}>
                <Svg w={40} h={36} box="8 70 40 36">{BIG.paste}</Svg>
                <T w={28} $color="#a19f9d">Paste</T>
              </BigButton>
              <SmallButtons>
                <SmallButton>
                  <Svg w={17} h={18}><path d="M5 2l6 10M12.500 2 7 12" strokeWidth="1.400" /><circle cx="5.500" cy="14" r="2" stroke={C.ib} strokeWidth="1.400" /><circle cx="12" cy="14" r="2" stroke={C.ib} strokeWidth="1.400" /></Svg>
                  <T w={19}>Cut</T>
                </SmallButton>
                <SmallButton>
                  <Svg w={17} h={18}><path d="M7 14.500H1.500v-13h7V4" fill="#fafafa" /><path d="M7.500 4.500h5l4 4v8h-9zM12.500 4.500v4h4M9.500 11.500h5M9.500 13.500h5" fill="#fafafa" /></Svg>
                  <T w={28}>Copy</T>
                </SmallButton>
                <SmallButton>
                  <Svg w={17} h={18}><path d="M1.500 7.500 8 4l5 6-4 5.500z" fill="#F8B878" stroke={C.or} strokeWidth="1.300" /><path d="M6.500 5l6.500 6 1.500-2L8.500 3z" fill="#fff" /><path d="M10.500 5 14.500.500l2 1.500-3.500 5" fill="#fafafa" /></Svg>
                  <T w={78}>Format painter</T>
                </SmallButton>
              </SmallButtons>
            </GroupBody>
            <GroupName><T w={43} $size={9.500}>Clipboard</T></GroupName>
          </Group>
          {GROUPS.map((gr) => (
            <Group key={gr.name} $w={gr.w}>
              <GroupBody $pad={gr.pad}>
                {gr.items.map(([id, w, cx, l1, w1, l2, w2, drop]) => (
                  <BigButton key={id} $w={w}>
                    <Svg w={40} h={36} box={`${cx - 20} 70 40 36`}>{BIG[id]}</Svg>
                    <T w={w1}>{l1}</T>
                    {l2 && <Line2><T w={w2}>{l2}</T>{drop && <DownSmall />}</Line2>}
                  </BigButton>
                ))}
              </GroupBody>
              <GroupName><T w={gr.nw} $size={9.500}>{gr.name}</T></GroupName>
            </Group>
          ))}
          <Collapse><Chevron w={10} h={7} d="M1 6 5 2l4 4" color={C.dark} sw={2} /></Collapse>
        </Groups>
      </Ribbon>

      <Body>
        <Rail>
          <RailItem $on><Svg w={17} h={16} stroke={C.ink}><path d="M2.500 1v12.500H16M5.500 4.500h2v7h-2zM9.500 6.500h2v5h-2zM13.500 2.500h2v9h-2z" strokeWidth="1.200" /></Svg></RailItem>
          <RailItem><Svg w={18} h={16} stroke={C.ig}><path d="M1.500.500h15v14h-15zM1.500 2.500h15M1.500 6.500h15M1.500 10.500h15M6.500 2.500v12M11.500 2.500v12" /></Svg></RailItem>
          <RailItem><Svg w={19} h={19} stroke={C.ig}><path d="M.500 5.500h7v8h-7zM.500 9.500h7M10.500.500h7v7h-7zM10.500 3.500h7M10.500 10.500h7v7h-7zM10.500 13.500h7M4.500 5V2.500h6M4.500 14v2h6" /></Svg></RailItem>
        </Rail>

        <Canvas>
          <StackedChart />
          <Logos />
          <IndustryChart />
          <PriceChart />
          <TreeMap />
          <ProfitChart />
          <Slicer $x={354} $y={271} $w={149} $h={141} $bg="#fff">
            <T w={54.500} $size={14.500} $din $weight={400}>Quarter</T>
            <SlicerRows>
              <SlicerRow><SlicerBox $state="part" /><T w={61} $size={14} $color={C.grey}>Select all</T></SlicerRow>
              {[1, 2, 3, 4].map((q) => (
                <SlicerRow key={q}><SlicerBox $state={q === 3 ? "on" : "off"} /><T w={35} $size={14} $color={C.grey}>{`Qtr ${q}`}</T></SlicerRow>
              ))}
            </SlicerRows>
          </Slicer>
          <Card $x={503} $y={271} $w={184} $h={152} $bg="#fff">
            <T w={108} $size={42} $lh={48} $din>2.80M</T>
            <T w={65} $color={C.grey} $size={12}>Gross Profit</T>
            {HANDLES.map(([l, t, w, h], i) => <Handle key={i} $l={l} $t={t} $w={w} $h={h} />)}
          </Card>
          <Visual $x={638} $y={253} $w={17} $h={15}><Funnel /></Visual>
          <Visual $x={666} $y={257} $w={16} $h={3}><Dots /></Visual>
          <PageEdge />
        </Canvas>

        <Filters>
          <Chevron w={8} h={14} d="M7 1 1.500 7 7 13" />
          <FilterMark><Svg w={13} h={14} stroke={C.grey}><path d="M12 1v12.500L6.500 9H1V6h5.500z" /></Svg></FilterMark>
          <VerticalLabel>Filters</VerticalLabel>
        </Filters>

        <Pane $edge>
          <PaneHead><T w={99} $size={15} $weight={600} $color="#484644">Visualizations</T><Chevron w={8} h={14} d="M1 1 6.500 7 1 13" /></PaneHead>
          <VizGrid>
            {VIZ.map((icon, i) => {
              const pic = <Svg w={18} h={18} box="-1 -1 18 18">{icon}</Svg>;
              return <VizCell key={i}>{i === 21 ? <VizPicked>{pic}</VizPicked> : pic}</VizCell>;
            })}
          </VizGrid>
          <PaneTabs>
            <PaneTab $on><Svg w={22} h={20} stroke={C.ink}><path d="M2 .500h16" /><path d="M1.500 3.500h19v6h-19zM1.500 12.500h19v6h-19z" strokeDasharray="2 1" /></Svg></PaneTab>
            <PaneTab><Svg w={20} h={22} stroke={C.ink}><path d="M1.500 2.500h14v5h-14zM15.500 4.500h3v6h-9v2M7.500 12.500h4v8h-4z" /></Svg></PaneTab>
            <PaneTab><Svg w={22} h={22} stroke={C.ink}><circle cx="9.500" cy="9" r="8" /><path d="M15 14.500l6 6M1.500 10 6 6l3 2 3-4 2 1 2-2M5.500 9.500v6M8.500 10.500v6M11.500 8.500v8M14.500 7.500v7" /></Svg></PaneTab>
          </PaneTabs>
          <FieldsLabel><T w={30}>Fields</T></FieldsLabel>
          <Well $h={29}>
            <Pill><T w={62}>Gross Profit</T><Grow /><Chevron w={12} h={7} d="M.500.500 6 6 11.500.500" /><Svg w={9} h={9} stroke={C.grey}><path d="M.500.500l8 8M8.500.500l-8 8" /></Svg></Pill>
          </Well>
          <DrillHead><T w={93} $size={15} $weight={600} $color="#484644">Drill through</T></DrillHead>
          <Setting><T w={67}>Cross-report</T></Setting>
          <ToggleRow><T w={17}>Off</T><Svg w={31} h={12} sw={2} stroke={C.grey}><circle cx="6" cy="6" r="5" fill="#fff" /><path d="M11 6h19" /></Svg></ToggleRow>
          <Setting><T w={74}>Keep all filters</T></Setting>
          <ToggleRow><T w={16}>On</T><Svg w={31} h={12} sw={2} stroke={C.grey}><path d="M0 6h20" /><circle cx="24" cy="6" r="5" fill={C.grey} /></Svg></ToggleRow>
          <Well $h={26} $gap={3}><T w={151}>Add drill-through fields here</T></Well>
        </Pane>

        <Pane>
          <PaneHead><T w={41} $size={15} $weight={600} $color="#484644">Fields</T><Chevron w={8} h={14} d="M1 1 6.500 7 1 13" /></PaneHead>
          <Search><Svg w={17} h={17} sw={1.100}><circle cx="10.500" cy="6" r="5" /><path d="M7 9.500 1 15.500" /></Svg><T w={38}>Search</T></Search>
          <Tree>
            <TableRow><Chevron d="M.500 6 6 1l5.500 5" /><TableIcon /><TableName><T w={99}>CustomerDemog...</T></TableName></TableRow>
            <FieldList>{FIELDS.map(([n, w]) => <FieldRow key={n}><CheckBox /><T w={w}>{n}</T></FieldRow>)}</FieldList>
            <TableRow><Chevron d="M.500 1 6 6l5.500-5" /><TableIcon /><TableName><T w={97}>Custumer Address</T></TableName></TableRow>
            <TableRow><Chevron d="M.500 1 6 6l5.500-5" /><TableIcon /><TableName><T w={101}>NewCustomerList...</T></TableName></TableRow>
            <TableRow>
              <Chevron d="M.500 1 6 6l5.500-5" /><TableIcon /><TableName><T w={67} $weight={600}>Transactions</T></TableName>
              <TickBadge><Svg w={12} h={12}><circle cx="6" cy="6" r="6" fill={C.yellow} stroke="none" /><path d="M3.500 6.500 5.500 8l3.500-3.500" strokeWidth="1.300" /></Svg></TickBadge>
            </TableRow>
          </Tree>
        </Pane>
      </Body>
    </Window>
  );
}
